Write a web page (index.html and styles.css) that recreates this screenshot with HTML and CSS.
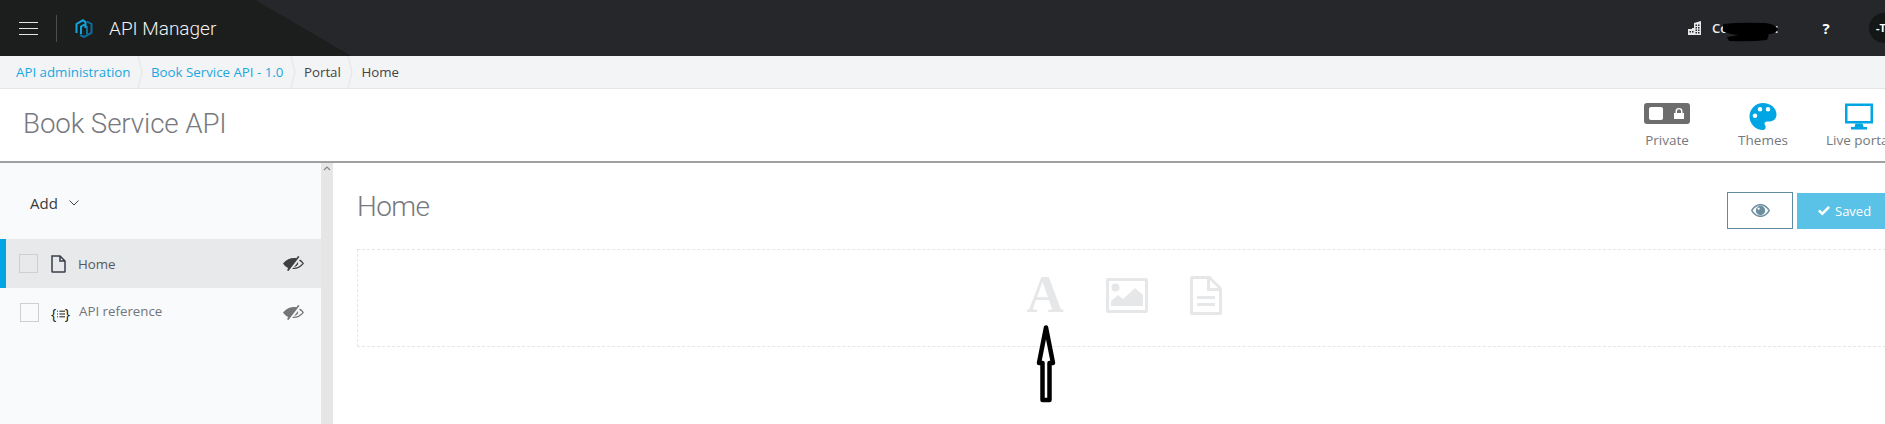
FILE: index.html
```html
<!DOCTYPE html>
<html lang="en">
<head>
  <meta charset="UTF-8" />
  <title>API Manager</title>
  <link rel="stylesheet" href="styles.css">
</head>
<body>
  <!-- Top bar -->
  <header class="topbar">
    <div class="burger"><span></span><span></span><span></span></div>
    <div class="topbar-divider"></div>
    <svg class="logo" viewBox="0 0 18 19" fill="none" stroke-width="2">
      <path stroke="#0b6f9c" d="M5 16l4 2 7.500-4V5L12 2.500M9.500 6.500l2.500 1.500v7"/>
      <path stroke="#12a5dc" d="M1.500 14V5L8 1.300l2.500 1.700V9M6 15V7.500L9.500 5.500"/>
    </svg>
    <div class="app-name">API Manager</div>
    <div class="topbar-right">
      <svg class="org-icon" viewBox="0 0 14 14" fill="#e8e8e8">
        <path d="M6 2l7-2v14H0V8h4V7h2zM7.500 3.500v1.500H9V3.500zm2.500 0v1.500h1.500V3.500zM7.500 6v1.500H9V6zM10 6v1.500h1.500V6zM7.500 8.500v1.500H9V8.500zM10 8.500v1.500h1.500V8.500zM1.500 10v1.500H3V10zM4 10v1.500h1.500V10zm3.500 1v1.500H9V11zm2.500 0v1.500h1.500V11z" fill-rule="evenodd"/>
      </svg>
      <div class="org-name">
        Company :
        <svg class="scribble" viewBox="0 0 60 20" fill="#000">
          <path d="M2 2 Q20 0 44 1 Q54 2 57 7 Q55 12 48 12 L46 18 Q30 20 8 19 L6 15 L18 13 Q6 12 2 9z"/>
        </svg>
      </div>
      <div class="help">?</div>
      <div class="avatar">-T</div>
    </div>
  </header>

  <!-- Breadcrumb -->
  <nav class="crumbs">
    <a class="crumb link">API administration</a>
    <svg class="crumb-sep" viewBox="0 0 6 32"><path d="M1 0l4 16-4 16"/></svg>
    <a class="crumb link">Book Service API - 1.0</a>
    <svg class="crumb-sep" viewBox="0 0 6 32"><path d="M1 0l4 16-4 16"/></svg>
    <span class="crumb">Portal</span>
    <svg class="crumb-sep" viewBox="0 0 6 32"><path d="M1 0l4 16-4 16"/></svg>
    <span class="crumb">Home</span>
  </nav>

  <!-- Title bar -->
  <div class="titlebar">
    <h1>Book Service API</h1>
    <div class="tools">
      <div class="tool">
        <div class="toggle">
          <span class="toggle-knob"></span>
          <svg class="toggle-lock" viewBox="0 0 10 11" fill="#fff">
            <path d="M0 5h1.500V3.200a3.500 3.200 0 0 1 7 0V5H10v6H0zM3 5h4V3.200a2 1.900 0 0 0-4 0z" fill-rule="evenodd"/>
          </svg>
        </div>
        <span>Private</span>
      </div>
      <div class="tool">
        <svg class="tool-icon" viewBox="0 0 27 27" fill="#00a5e3">
          <path fill-rule="evenodd" d="M13.500 0C21 0 27 5 27 11.500c0 4.500-3.500 7-7.500 7h-2c-1.500 0-2.500 1-2.500 2.200 0 1.300 1.200 1.800 1.200 3.300C16.200 26 15 27 13.500 27 6 27 0 21 0 13.500S6 0 13.500 0zM5.500 10.500a2.300 2.300 0 1 0 0 4.600 2.300 2.300 0 0 0 0-4.600zM10.500 4a2.300 2.300 0 1 0 0 4.600 2.300 2.300 0 0 0 0-4.600zM18.500 4a2.300 2.300 0 1 0 0 4.600 2.300 2.300 0 0 0 0-4.600z"/>
        </svg>
        <span>Themes</span>
      </div>
      <div class="tool">
        <svg class="tool-icon" viewBox="0 0 28 26" fill="#00a5e3">
          <path fill-rule="evenodd" d="M0 0h28v20H0zM2.500 2.500v15h23v-15z"/>
          <path d="M10.500 20h7l1 3.500H22V26H6v-2.500h3.500z"/>
        </svg>
        <span>Live portal</span>
      </div>
    </div>
  </div>

  <div class="workspace">
    <!-- Page list -->
    <aside class="sidebar">
      <div class="add-row">
        Add
        <svg class="add-caret" viewBox="0 0 10 6" fill="none"><path d="M.5.500l4.500 4.500L9.500.500"/></svg>
      </div>
      <div class="page-row active">
        <span class="check"></span>
        <svg class="page-icon" viewBox="0 0 15 18" fill="none" stroke="#3a3d4a" stroke-width="1.500">
          <path d="M1 1h8l5 5v10.500a.5.500 0 0 1-.5.500h-12a.5.500 0 0 1-.5-.5zM9 1v5h5"/>
        </svg>
        <span class="page-name">Home</span>
        <svg class="hide-icon" viewBox="0 0 21 15" fill="#3f3f3f">
          <path d="M15 0 13.400 2.300C9 1.300 4 3 0 7.500c1.500 2.200 3.200 3.700 5.200 4.600L4 14.200l1.500.8L16.500.8zM21 7.500c-1-1.500-2.400-3-4-4l-.9 1.200c1.300.8 2.500 1.800 3.400 2.800-2.700 3-6 4.500-9.300 4.300l-.9 1.200c4.200.6 8.200-1.200 11.700-5.500zM15 6l-3.900 5c2.800-.5 4.700-2.600 3.900-5z"/>
        </svg>
      </div>
      <div class="page-row">
        <span class="check"></span>
        <span class="api-icon">{<svg viewBox="0 0 10 9" fill="none" stroke="#111" stroke-width="1.200"><path d="M0 1h1.200M3 1h7M0 4.500h1.200M3 4.500h7M0 8h1.200M3 8h7"/></svg>}</span>
        <span class="page-name muted">API reference</span>
        <svg class="hide-icon" viewBox="0 0 21 15" fill="#767676">
          <path d="M15 0 13.400 2.300C9 1.300 4 3 0 7.500c1.500 2.200 3.200 3.700 5.200 4.600L4 14.200l1.500.8L16.500.8zM21 7.500c-1-1.500-2.400-3-4-4l-.9 1.200c1.300.8 2.500 1.800 3.400 2.800-2.700 3-6 4.500-9.300 4.300l-.9 1.200c4.200.6 8.200-1.200 11.700-5.500zM15 6l-3.900 5c2.800-.5 4.700-2.600 3.900-5z"/>
        </svg>
      </div>
    </aside>

    <div class="scroll-col">
      <svg class="scroll-up" viewBox="0 0 8 5" fill="none"><path d="M1 4l3-3 3 3"/></svg>
    </div>

    <!-- Editor -->
    <main class="editor">
      <div class="editor-head">
        <h2>Home</h2>
        <div class="editor-actions">
          <button class="btn-preview">
            <svg viewBox="0 0 19 13" fill="#6b8ea0" width="19" height="13">
              <path fill-rule="evenodd" d="M9.500 0c4 0 7.400 2.500 9.500 6.500-2.100 4-5.500 6.500-9.500 6.500S2.100 10.500 0 6.500C2.100 2.500 5.500 0 9.500 0zM9.500 1.400c-3.200 0-6 2-7.900 5.100 1.900 3.100 4.700 5.100 7.900 5.100s6-2 7.900-5.100c-1.900-3.100-4.700-5.100-7.900-5.100z"/>
              <path fill-rule="evenodd" d="M9.500 1.800a4.700 4.700 0 1 1 0 9.400 4.700 4.700 0 0 1 0-9.400zM7.600 3.600a1.100 1.100 0 1 0 0 2.200 1.100 1.100 0 0 0 0-2.200z"/>
            </svg>
          </button>
          <button class="btn-saved">
            <svg viewBox="0 0 12 10" fill="#fff" width="12" height="10"><path d="M0 5.200 1.800 3.400 4.300 5.900 10.200 0 12 1.800 4.300 9.500z"/></svg>
            Saved
          </button>
        </div>
      </div>

      <div class="dropzone">
        <span class="drop-text">A</span>
        <svg class="drop-image" viewBox="0 0 42 35" fill="#e6e7e8">
          <path fill-rule="evenodd" d="M2 0h38a2 2 0 0 1 2 2v31a2 2 0 0 1-2 2H2a2 2 0 0 1-2-2V2a2 2 0 0 1 2-2zM3 3v29h36V3z"/>
          <circle cx="9.500" cy="9.500" r="4"/>
          <path d="M5 28v-5l7-6 5 4 12-11 8 7v11z"/>
        </svg>
        <svg class="drop-file" viewBox="0 0 32 39" fill="#e6e7e8">
          <path fill-rule="evenodd" d="M2 0h18l12 12v25a2 2 0 0 1-2 2H2a2 2 0 0 1-2-2V2a2 2 0 0 1 2-2zM3 3v33h26V15H17V3zM20 4v8h8z"/>
          <path d="M7 20h18v3H7zM7 27h18v3H7z"/>
        </svg>
      </div>

      <svg class="arrow" viewBox="0 0 24 84" fill="#fff" stroke="#000" stroke-width="4.500" stroke-linejoin="round">
        <path d="M12 4.500 L19 40 H15.500 V77 H8.500 V40 H5 Z"/>
      </svg>
    </main>
  </div>
</body>
</html>
```

FILE: styles.css
```css
* {
  box-sizing: border-box;
}

body {
  margin: 0;
  width: 1885px;
  height: 424px;
  overflow: hidden;
  display: flex;
  flex-direction: column;
  background: #fff;
  color: #333;
  font-family: "Open Sans", sans-serif;
  font-size: 13px;
}

/* top bar */
.topbar {
  height: 56px;
  flex: none;
  display: flex;
  align-items: center;
  padding-left: 19px;
  background:
    linear-gradient(#1c1d1d, #1c1d1d) 0 0 / 255px 100% no-repeat,
    linear-gradient(to top right, #1c1d1d 50%, transparent 50.5%) 255px 0 / 96px 100% no-repeat,
    #25272a;
  color: #fff;
}

.burger {
  width: 19px;
  display: flex;
  flex-direction: column;
  gap: 5px;
}

.burger span {
  height: 1px;
  background: #e4e4e4;
}

.topbar-divider {
  width: 1px;
  height: 27px;
  margin: 0 18px;
  background: #4c4d4e;
}

.logo {
  width: 18px;
  height: 19px;
  margin-right: 16px;
}

.app-name {
  font-family: Roboto, sans-serif;
  font-size: 19px;
  font-weight: 300;
  color: #f2f2f2;
}

.topbar-right {
  margin-left: auto;
  margin-right: -14px;
  display: flex;
  align-items: center;
}

.org-icon {
  width: 14px;
  height: 14px;
}

.org-name {
  position: relative;
  width: 70px;
  margin-left: 10px;
  margin-right: 38px;
  white-space: nowrap;
  font-size: 13px;
  font-weight: 600;
  color: #eee;
}

.scribble {
  position: absolute;
  left: 9px;
  top: 3px;
  width: 60px;
  height: 20px;
}

.help {
  font-size: 15px;
  font-weight: 700;
  width: 12px;
  text-align: center;
  margin-right: 37px;
}

.avatar {
  width: 30px;
  height: 30px;
  border-radius: 50%;
  background: #151616;
  font-size: 11px;
  font-weight: 700;
  line-height: 30px;
  padding-left: 7px;
}

/* breadcrumb */
.crumbs {
  height: 33px;
  flex: none;
  display: flex;
  align-items: center;
  padding-left: 16px;
  background: #f3f4f6;
  border-bottom: 1px solid #e4e5e6;
  font-size: 13.300px;
  color: #444;
}

.crumb.link {
  color: #1ba7e0;
}

.crumb-sep {
  width: 6px;
  height: 32px;
  margin: 0 8px 0 6.500px;
  fill: none;
  stroke: #e6e7e9;
  stroke-width: 1.200;
}

/* title bar */
.titlebar {
  height: 74px;
  flex: none;
  display: flex;
  align-items: flex-start;
  padding-left: 23px;
  border-bottom: 2px solid #a0a0a0;
}

.titlebar h1 {
  margin: 18px 0 0;
  font-family: Roboto, sans-serif;
  font-size: 27.700px;
  font-weight: 300;
  letter-spacing: -.1px;
  color: #77797e;
}

.tools {
  margin-left: auto;
  margin-right: -22px;
  padding-top: 14px;
  display: flex;
}

.tool {
  width: 96px;
  display: flex;
  flex-direction: column;
  align-items: center;
  color: #75787d;
  font-size: 13.500px;
  line-height: 18px;
  white-space: nowrap;
}

.tool-icon {
  height: 27px;
  width: 28px;
  margin-bottom: 1px;
}

.toggle {
  width: 46px;
  height: 21px;
  flex: none;
  display: flex;
  align-items: center;
  justify-content: space-between;
  padding: 0 6px 0 5px;
  background: #6d6d6d;
  border-radius: 3px;
  margin-bottom: 7px;
}

.toggle-knob {
  width: 14px;
  height: 13px;
  background: #fff;
  border-radius: 2px;
}

.toggle-lock {
  width: 10px;
  height: 11px;
}

/* workspace */
.workspace {
  flex: 1;
  display: flex;
  min-height: 0;
}

.sidebar {
  width: 321px;
  flex: none;
  background: #f9fafc;
}

.add-row {
  height: 76px;
  padding: 4px 0 0 30px;
  display: flex;
  align-items: center;
  font-size: 15px;
  color: #3a3a3a;
}

.add-caret {
  width: 10px;
  height: 6px;
  margin-left: 11px;
  stroke: #444;
  stroke-width: 1;
}

.page-row {
  height: 48px;
  display: flex;
  align-items: center;
  padding: 0 17px 0 20px;
  color: #55585e;
}

.page-row.active {
  height: 49px;
  padding-left: 13px;
  background: #e8e9eb;
  border-left: 6px solid #00a5e3;
}

.check {
  width: 19px;
  height: 19px;
  flex: none;
  border: 1px solid #cfcfcf;
  background: #f9fafc;
}

.active .check {
  background: #e8e9eb;
}

.page-icon {
  width: 15px;
  height: 18px;
  margin-left: 13px;
  margin-right: 12px;
}

.api-icon {
  width: 19px;
  margin-left: 12px;
  margin-right: 9px;
  margin-top: 3px;
  display: flex;
  align-items: center;
  justify-content: space-between;
  font-size: 14px;
  color: #111;
}

.api-icon svg {
  width: 8px;
  height: 8px;
}

.page-name {
  font-size: 13.300px;
}

.page-name.muted {
  color: #72757a;
  margin-top: -2px;
}

.hide-icon {
  width: 21px;
  height: 15px;
  margin-left: auto;
}

.scroll-col {
  width: 12px;
  flex: none;
  background: #e6e6e6;
  display: flex;
  justify-content: center;
  align-items: flex-start;
  padding-top: 3px;
}

.scroll-up {
  width: 8px;
  height: 5px;
  stroke: #888;
  stroke-width: 1.200;
}

.editor {
  position: relative;
  flex: 1;
  min-width: 0;
  padding: 29px 0 0 24px;
}

.editor-head {
  height: 37px;
  display: flex;
  align-items: center;
  margin-bottom: 20px;
}

.editor-head h2 {
  margin: -9px 0 0;
  font-family: Roboto, sans-serif;
  font-size: 28px;
  font-weight: 300;
  letter-spacing: -.6px;
  color: #77797e;
}

.editor-actions {
  margin-left: auto;
  margin-right: -20px;
  display: flex;
  gap: 4px;
}

.btn-preview {
  width: 66px;
  height: 37px;
  padding: 0;
  background: #fff;
  border: 1px solid #5f8a9f;
  display: flex;
  align-items: center;
  justify-content: center;
}

.btn-saved {
  width: 108px;
  height: 36px;
  margin-top: 1px;
  padding: 0 0 0 21px;
  border: none;
  background: #5bc2e7;
  color: #fff;
  font-family: inherit;
  font-size: 13px;
  display: flex;
  align-items: center;
  gap: 5px;
}

.dropzone {
  height: 98px;
  margin-right: -6px;
  padding-bottom: 6px;
  border: 1px dashed #e6e6e6;
  display: flex;
  align-items: center;
  justify-content: center;
  gap: 42px;
}

.drop-text {
  font-family: "Liberation Serif", serif;
  font-size: 52px;
  font-weight: 700;
  line-height: 36px;
  color: #e6e7e8;
}

.drop-image {
  width: 42px;
  height: 35px;
}

.drop-file {
  width: 32px;
  height: 39px;
}

.arrow {
  position: absolute;
  left: 701px;
  top: 160px;
  width: 24px;
  height: 84px;
}
```
